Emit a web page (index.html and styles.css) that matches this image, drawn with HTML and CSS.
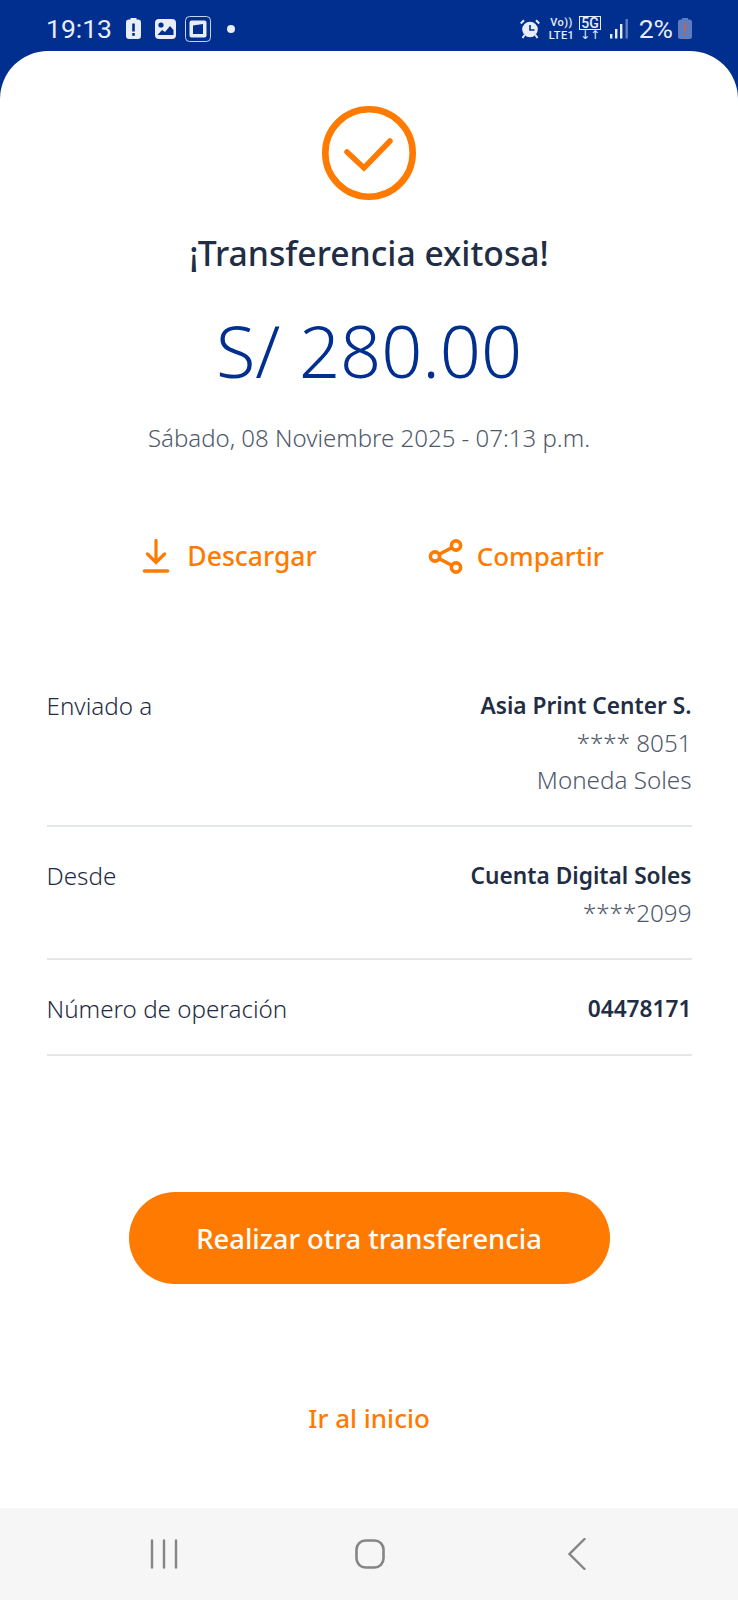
FILE: index.html
```html
<!DOCTYPE html>
<html lang="es">
	<head>
		<meta charset="UTF-8">
		<title>Transferencia exitosa</title>
		<link rel="stylesheet" href="styles.css">
	</head>
	<body>
		<div class="status">
			<div class="status-left">
				<span class="clock">19:13</span>
				<svg class="st-batt" width="15" height="21" viewBox="0 0 15 21"><path d="M4.500 0h6v1.500h1.500a3 3 0 0 1 3 3V18a3 3 0 0 1-3 3H3a3 3 0 0 1-3-3V4.500a3 3 0 0 1 3-3h1.500z" fill="#e8edf7"/><rect x="6.200" y="5.500" width="2.600" height="8" fill="#002f8f"/><rect x="6.200" y="15" width="2.600" height="2.800" fill="#002f8f"/></svg>
				<svg class="st-pic" width="21" height="20" viewBox="0 0 21 20"><rect width="21" height="20" rx="4" fill="#e8edf7"/><circle cx="6" cy="6" r="2.600" fill="#002f8f"/><path d="M2.500 16l4.500-5 3 2 5-6 3.500 4v5z" fill="#002f8f"/></svg>
				<svg class="st-cast" width="26" height="26" viewBox="0 0 26 26"><rect x=".5" y=".5" width="25" height="25" rx="4" fill="none" stroke="#c9d4ec"/><rect x="4.500" y="4.500" width="17" height="17" rx="2" fill="#e8edf7"/><path d="M8 9.500l10-1.500v10H8z" fill="#002f8f"/></svg>
				<span class="st-dot"></span>
			</div>
			<div class="status-right">
				<svg class="st-alarm" width="20" height="20" viewBox="0 0 20 20"><circle cx="10" cy="10.500" r="7.800" fill="#e8edf7"/><path d="M10 6v5h4.500" fill="none" stroke="#002f8f" stroke-width="1.600"/><path d="M.8 4.500L4 1.300M19.200 4.500L16 1.300" stroke="#e8edf7" stroke-width="2"/><path d="M4.500 16l-2 3M15.500 16l2 3" stroke="#e8edf7" stroke-width="2"/></svg>
				<div class="st-volte"><span>Vo))</span><span>LTE1</span></div>
				<div class="st-5g"><span class="st-5g-box">5G</span><span class="st-arrows">↓↑</span></div>
				<svg class="st-signal" width="18" height="21" viewBox="0 0 18 21"><rect x="0" y="16" width="2.400" height="4.500" fill="#e8edf7"/><rect x="5" y="11" width="2.400" height="9.500" fill="#e8edf7"/><rect x="10" y="6" width="2.400" height="14.500" fill="#e8edf7"/><rect x="15.500" y="1" width="2.400" height="19.500" fill="#5f7dbb"/></svg>
				<span class="st-pct">2%</span>
				<svg class="st-low" width="14" height="21" viewBox="0 0 14 21"><path d="M4 0h6v1.500h1.500A2.500 2.500 0 0 1 14 4v14.500a2.500 2.500 0 0 1-2.500 2.500h-9A2.500 2.500 0 0 1 0 18.500V4a2.500 2.500 0 0 1 2.500-2.500H4z" fill="#5f7dbb"/><rect x="6" y="6" width="2" height="7" fill="#c0605f"/><rect x="6" y="15" width="2" height="2" fill="#c0605f"/></svg>
			</div>
		</div>

		<main class="card">
			<svg class="check" width="94" height="94" viewBox="0 0 94 94"><circle cx="47" cy="47" r="43.700" fill="none" stroke="#ff7a00" stroke-width="6.600"/><path d="M25 46l17 16 26-27" fill="none" stroke="#ff7a00" stroke-width="5.500" stroke-linecap="round"/></svg>
			<h1 class="title">¡Transferencia exitosa!</h1>
			<p class="amount">S/ 280.00</p>
			<p class="date">Sábado, 08 Noviembre 2025 - 07:13 p.m.</p>

			<div class="actions">
				<a class="action action-down">
					<svg width="28" height="34" viewBox="0 0 28 34"><path d="M14 1.500v22M5.500 15l8.500 8.500 8.500-8.500" fill="none" stroke="#ff7a00" stroke-width="3.200" stroke-linecap="round"/><path d="M2.500 32h23" stroke="#ff7a00" stroke-width="3.600" stroke-linecap="round"/></svg>
					Descargar
				</a>
				<a class="action action-share">
					<svg width="35" height="35" viewBox="0 0 35 35"><path d="M7 17.500L28 6.500M7 17.500l21 11" stroke="#ff7a00" stroke-width="3.600"/><circle cx="7" cy="17.500" r="4.600" fill="#fff" stroke="#ff7a00" stroke-width="3.600"/><circle cx="28" cy="6.500" r="4.600" fill="#fff" stroke="#ff7a00" stroke-width="3.600"/><circle cx="28" cy="28.500" r="4.600" fill="#fff" stroke="#ff7a00" stroke-width="3.600"/></svg>
					Compartir
				</a>
			</div>

			<div class="details">
				<div class="row row-to">
					<span class="label">Enviado a</span>
					<div class="values">
						<strong>Asia Print Center S.</strong>
						<span>**** 8051</span>
						<span>Moneda Soles</span>
					</div>
				</div>
				<div class="row row-from">
					<span class="label">Desde</span>
					<div class="values">
						<strong>Cuenta Digital Soles</strong>
						<span>****2099</span>
					</div>
				</div>
				<div class="row row-op">
					<span class="label">Número de operación</span>
					<div class="values"><strong>04478171</strong></div>
				</div>
			</div>

			<a class="btn">Realizar otra transferencia</a>
			<a class="home">Ir al inicio</a>
		</main>

		<div class="navbar">
			<svg width="28" height="30" viewBox="0 0 28 30"><path d="M2 1.500v27M14 1.500v27M26 1.500v27" stroke="#858585" stroke-width="2.400" stroke-linecap="round"/></svg>
			<svg width="30" height="30" viewBox="0 0 30 30"><rect x="1.500" y="1.500" width="27" height="27" rx="9" fill="none" stroke="#858585" stroke-width="2.600"/></svg>
			<svg class="nav-back" width="18" height="32" viewBox="0 0 18 32"><path d="M16.500 1L1.500 16l15 15" fill="none" stroke="#858585" stroke-width="2.400" stroke-linecap="round"/></svg>
		</div>
	</body>
</html>
```

FILE: styles.css
```css
* {
	margin: 0;
	padding: 0;
	box-sizing: border-box;
}

body {
	width: 738px;
	height: 1600px;
	background: #002f8f;
	font-family: "Noto Sans", sans-serif;
	display: flex;
	flex-direction: column;
	overflow: hidden;
}

.status {
	height: 51px;
	padding: 6px 46px 0 46px;
	display: flex;
	justify-content: space-between;
	align-items: center;
	color: #e8edf7;
}

.status-left,
.status-right {
	display: flex;
	align-items: center;
}

.clock {
	font-family: Roboto, sans-serif;
	font-size: 26.500px;
	margin-right: 14px;
}

.st-pic {
	margin-left: 14px;
}

.st-cast {
	margin-left: 9px;
}

.st-dot {
	width: 8px;
	height: 8px;
	border-radius: 50%;
	background: #e8edf7;
	margin-left: 16px;
}

.st-volte,
.st-5g {
	display: flex;
	flex-direction: column;
	align-items: center;
	font-family: Roboto, sans-serif;
	font-weight: 500;
}

.st-volte {
	font-size: 11px;
	line-height: 13px;
	letter-spacing: .4px;
	margin-left: 9px;
}

.st-5g {
	margin-left: 5px;
}

.st-5g-box {
	border: 1px solid #e8edf7;
	padding: 0 1px;
	font-size: 14px;
	line-height: 12px;
}

.st-arrows {
	font-size: 12px;
	line-height: 11px;
	font-family: "DejaVu Sans", sans-serif;
}

.st-signal {
	margin-left: 9px;
}

.st-pct {
	font-family: Roboto, sans-serif;
	font-size: 26.500px;
	margin-left: 11px;
}

.st-low {
	margin-left: 5px;
}

.card {
	flex: 1;
	background: #fff;
	border-radius: 48px 48px 0 0;
	padding-top: 55px;
	display: flex;
	flex-direction: column;
	align-items: center;
}

.title {
	margin-top: 32px;
	font-size: 33.700px;
	line-height: 42px;
	font-weight: 500;
	color: #1f2d45;
}

.amount {
	margin-top: 30px;
	font-size: 72px;
	line-height: 92px;
	font-weight: 300;
	color: #002f8f;
}

.date {
	margin-top: 26px;
	font-size: 24px;
	line-height: 32px;
	font-weight: 300;
	color: #4f5a6b;
}

.actions {
	margin-top: 84px;
	padding-left: 8px;
	display: flex;
	gap: 111px;
}

.action {
	display: flex;
	align-items: center;
	font-size: 26.500px;
	line-height: 36px;
	font-weight: 500;
	color: #ff7a00;
}

.action-down {
	gap: 17px;
}

.action-share {
	gap: 14px;
	font-size: 26px;
}

.details {
	width: 645px;
	margin-top: 113px;
}

.row {
	display: flex;
	justify-content: space-between;
	border-bottom: 2px solid #e3e6ea;
	font-size: 24.200px;
	line-height: 37px;
	font-weight: 300;
	color: #1f2d45;
}

.row-to {
	height: 140px;
}

.row-from {
	height: 133px;
	padding-top: 30px;
}

.row-op {
	height: 96px;
	padding-top: 30px;
}

.values {
	display: flex;
	flex-direction: column;
	align-items: flex-end;
	color: #4f5a6b;
}

.values strong {
	font-size: 22.700px;
	font-weight: 600;
	color: #1f2d45;
}

.btn {
	margin-top: 136px;
	width: 481px;
	height: 92px;
	border-radius: 46px;
	background: #ff7a00;
	color: #fff;
	font-size: 27.400px;
	font-weight: 500;
	display: flex;
	align-items: center;
	justify-content: center;
}

.home {
	margin-top: 116px;
	font-size: 26px;
	line-height: 36px;
	font-weight: 500;
	color: #ff7a00;
}

.navbar {
	height: 92px;
	background: #f6f6f6;
	padding-left: 150px;
	display: flex;
	gap: 177px;
	align-items: center;
}

.nav-back {
	margin-left: 6px;
}
```
